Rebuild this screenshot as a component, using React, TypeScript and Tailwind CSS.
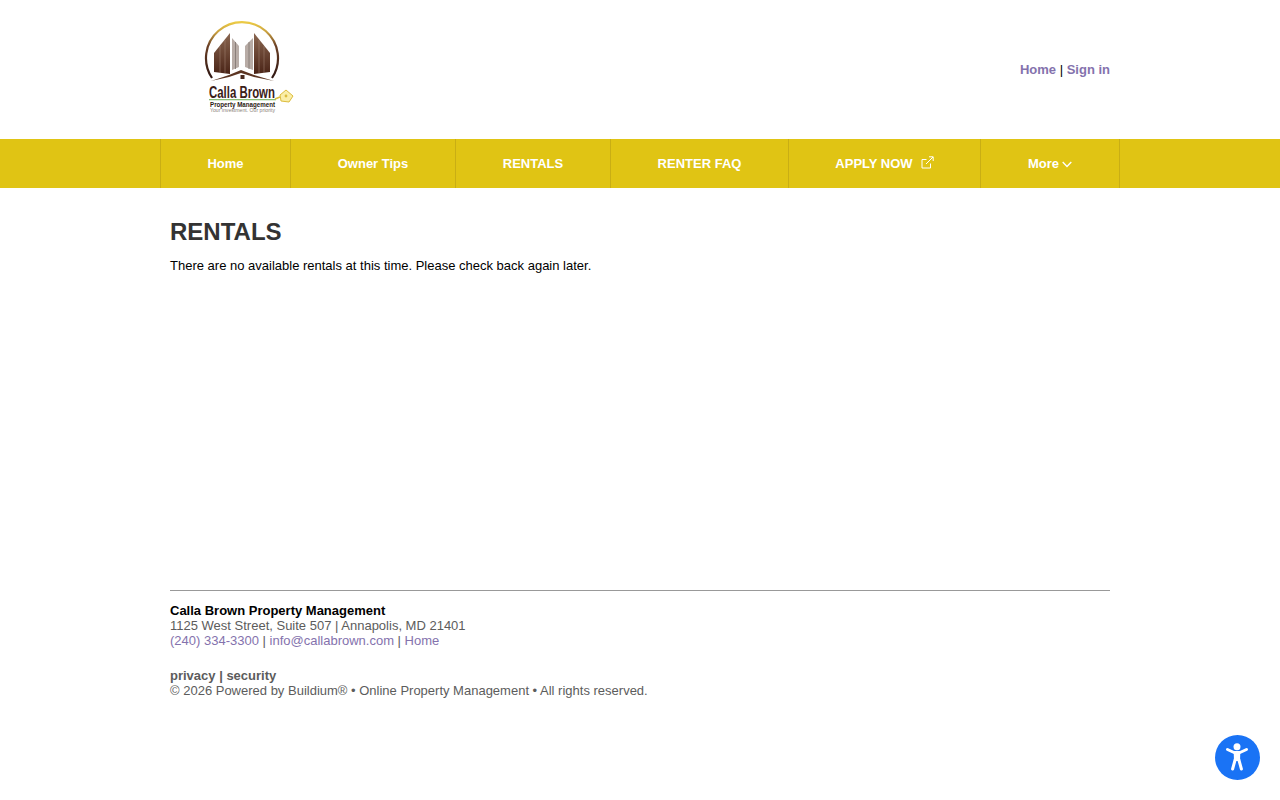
import React from "react";

function Logo() {
  return (
    <svg width="100" height="96" viewBox="198 18 100 96" className="block" aria-label="Calla Brown Property Management">
      <defs>
        <linearGradient id="ring" x1="0" y1="0" x2="0" y2="1">
          <stop offset="0" stopColor="#eccb45" />
          <stop offset="0.18" stopColor="#c9a040" />
          <stop offset="0.42" stopColor="#6b4026" />
          <stop offset="1" stopColor="#2f1712" />
        </linearGradient>
        <linearGradient id="bld" x1="0" y1="0" x2="0" y2="1">
          <stop offset="0" stopColor="#8a6650" />
          <stop offset="1" stopColor="#4a2417" />
        </linearGradient>
      </defs>
      <path d="M211 78 A36 36 0 1 1 271 78" fill="none" stroke="url(#ring)" strokeWidth="2.2" />
      <polygon points="213,53 229,33 229,74 213,72" fill="url(#bld)" />
      <polygon points="231,38 238,46 238,67 231,70" fill="#b8aca6" />
      <polygon points="244,46 252,38 252,70 244,67" fill="#b8aca6" />
      <polygon points="253,33 269,53 269,72 253,74" fill="url(#bld)" />
      <path d="M219 46 V73 M224 40 V73 M258 40 V73 M263 46 V73" stroke="#a78a78" strokeWidth="0.5" />
      <path d="M234.5 42 V69 M248 42 V69" stroke="#7f736e" strokeWidth="0.8" />
      <path d="M210 81 L228 75 L240 70 L253 75 L273 81 L253 77 L240 73 L228 77 Z" fill="#5c3522" />
      <rect x="239.5" y="75" width="4" height="4" fill="#4a2a1e" />
      <text transform="translate(208 98) scale(0.714 1)" fontFamily="'Liberation Sans', sans-serif" fontSize="16" fontWeight="700" fill="#3a2018">Calla Brown</text>
      <rect x="208" y="99.3" width="67" height="0.9" fill="#5aa23c" />
      <text x="209" y="107" fontFamily="'Liberation Sans', sans-serif" fontSize="7.5" fontWeight="700" fill="#2c1a14" textLength="65" lengthAdjust="spacingAndGlyphs">Property Management</text>
      <text x="209" y="112" fontFamily="'Liberation Sans', sans-serif" fontSize="4.6" fill="#8a8078" textLength="65" lengthAdjust="spacingAndGlyphs">Your investment. Our priority</text>
      <path d="M279 95 L285 90 L292 96 L288 102 L280 101 Z" fill="#faeea8" stroke="#dcbc3c" strokeWidth="1" />
      <path d="M274 99 L279 97" stroke="#dcbc3c" strokeWidth="1.6" />
      <circle cx="285" cy="96" r="1.4" fill="#dcbc3c" />
    </svg>
  );
}

function NavItem({ children, className }: { children: React.ReactNode; className: string }) {
  return (
    <a className={`flex h-full items-center justify-center border-l border-[#c9ae14] text-[13px] font-bold text-white ${className}`}>
      {children}
    </a>
  );
}

function A11y() {
  return (
    <svg width="45" height="45" viewBox="0 0 45 45" className="block">
      <circle cx="22.5" cy="22.5" r="22.5" fill="#1a73f5" />
      <circle cx="22" cy="11.7" r="3.5" fill="#fff" />
      <path d="M12.5 14.5 L19 17.5 H25 L31.5 14.5" fill="none" stroke="#fff" strokeWidth="3" strokeLinecap="round" strokeLinejoin="round" />
      <polygon points="18.7,17 25.3,17 25,26 19,26" fill="#fff" />
      <path d="M20.2 24.5 L17.6 34 M23.8 24.5 L26.4 34" fill="none" stroke="#fff" strokeWidth="3" strokeLinecap="round" />
    </svg>
  );
}

export default function App() {
  return (
    <div className="relative h-[800px] overflow-hidden bg-white font-['Liberation_Sans',Arial,sans-serif] text-[13px] text-black">
      <header className="mx-auto flex h-[139px] w-[960px] items-center justify-between pl-[39px] pr-[10px]">
        <div className="mt-[-7px]">
          <Logo />
        </div>
        <div className="font-bold leading-4">
          <a className="text-[#8472ad]">Home</a>
          <span className="font-normal"> | </span>
          <a className="text-[#8472ad]">Sign in</a>
        </div>
      </header>

      <nav className="h-[49px] bg-[#e0c414]">
        <div className="mx-auto flex h-full w-[960px] border-r border-[#c9ae14]">
          <NavItem className="w-[130px]">Home</NavItem>
          <NavItem className="w-[165px]">Owner Tips</NavItem>
          <NavItem className="w-[155px]">RENTALS</NavItem>
          <NavItem className="w-[178px]">RENTER FAQ</NavItem>
          <NavItem className="w-[192px]">
            APPLY NOW
            <svg width="13" height="13" viewBox="0 0 13 13" className="mb-[2px] ml-[8px]" fill="none" stroke="#fff" strokeWidth="1">
              <path d="M9.5 7.5 V12 H1 V3.5 H5.5" />
              <path d="M5 8 L12 1 M8 0.8 H12.2 V5" />
            </svg>
          </NavItem>
          <NavItem className="w-[139px]">
            More
            <svg width="10" height="7" viewBox="0 0 10 7" className="ml-[3px] mt-[1px]" fill="none" stroke="#fff" strokeWidth="1.4">
              <path d="M0.7 1 L5 5.4 L9.3 1" />
            </svg>
          </NavItem>
        </div>
      </nav>

      <main className="mx-auto h-[402px] w-[960px] px-[10px]">
        <h1 className="pt-[30px] text-[24px] font-bold leading-[28px] text-[#333333]">RENTALS</h1>
        <p className="mt-[10px] leading-[20px]">There are no available rentals at this time. Please check back again later.</p>
      </main>

      <footer className="mx-auto w-[940px] border-t border-[#999999] pt-[12px] leading-[15px] text-[#5c5c5c]">
        <div className="font-bold text-black">Calla Brown Property Management</div>
        <div>1125 West Street, Suite 507 | Annapolis, MD 21401</div>
        <div>
          <a className="text-[#8472ad]">(240) 334-3300</a> | <a className="text-[#8472ad]">info@callabrown.com</a> | <a className="text-[#8472ad]">Home</a>
        </div>
        <div className="mt-[20px] font-bold">privacy | security</div>
        <div>© 2026 Powered by Buildium® • Online Property Management • All rights reserved.</div>
      </footer>

      <div className="absolute left-[1215px] top-[735px]">
        <A11y />
      </div>
    </div>
  );
}
